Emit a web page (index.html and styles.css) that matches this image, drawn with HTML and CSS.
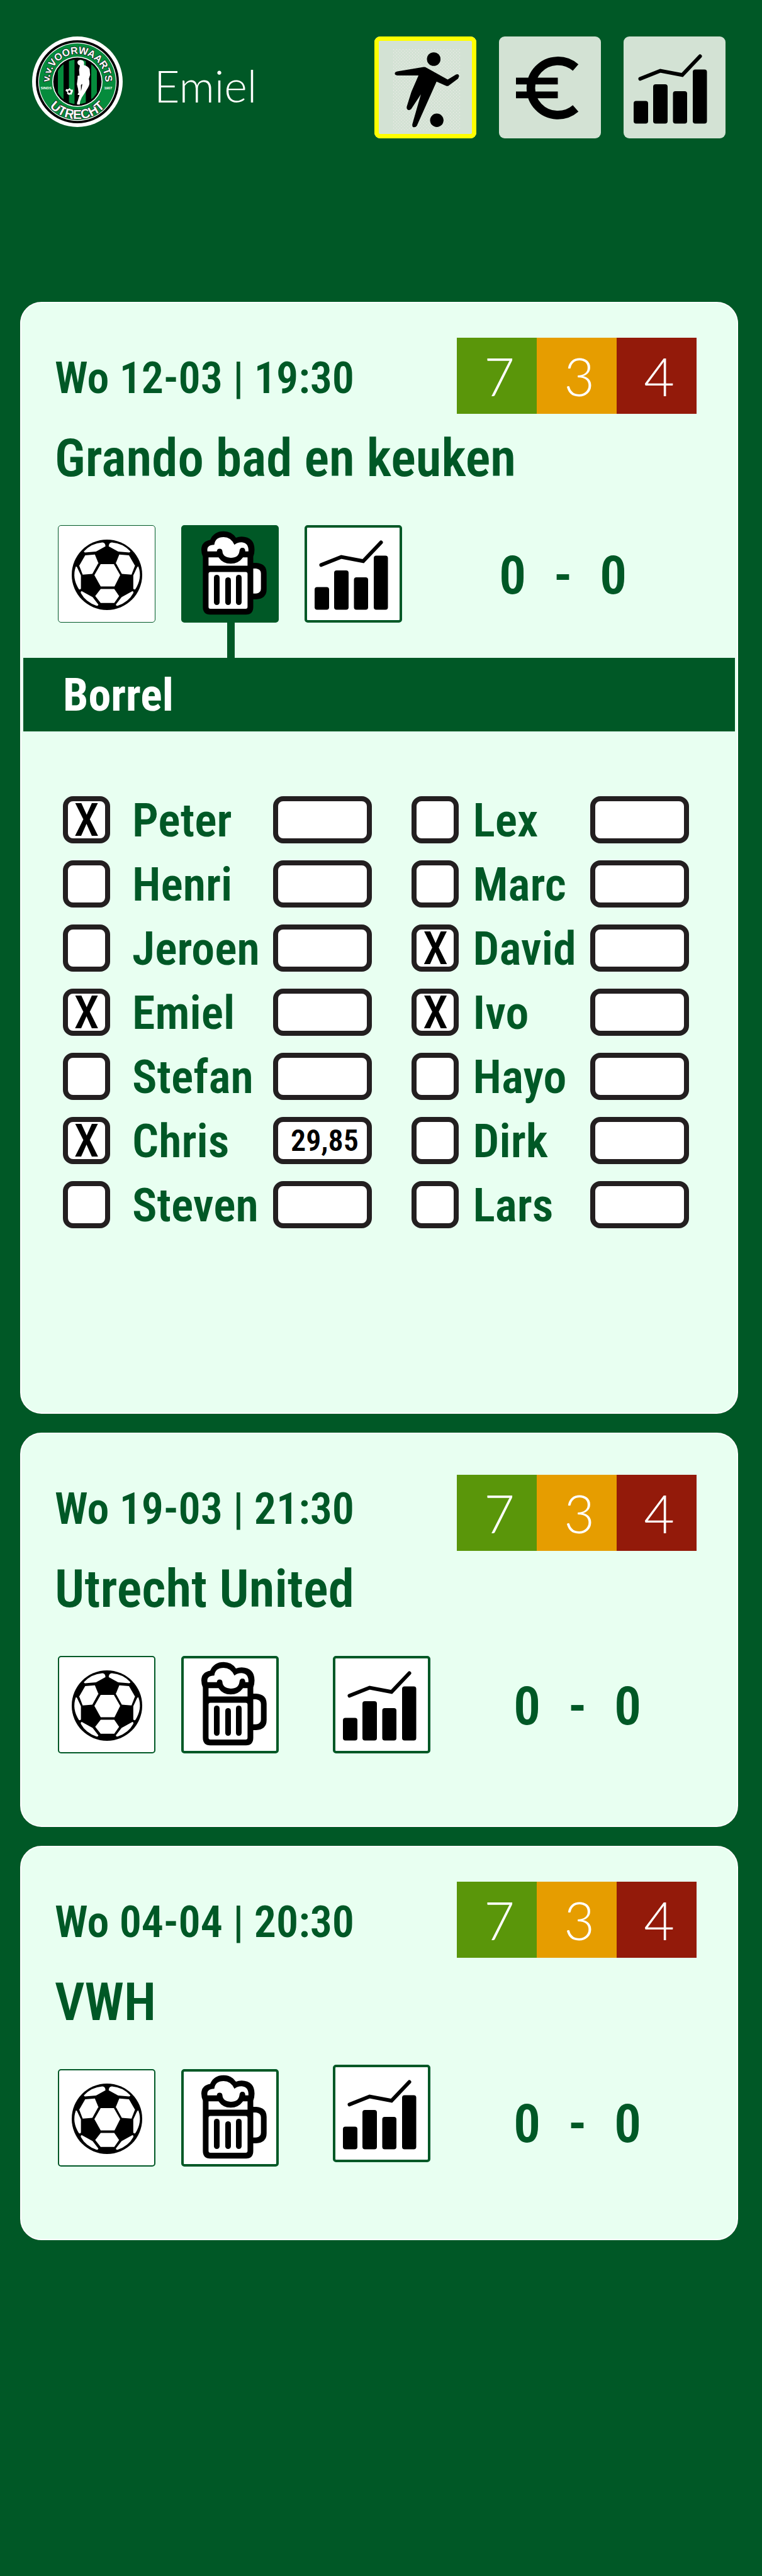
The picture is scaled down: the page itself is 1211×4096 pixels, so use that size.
FILE: index.html
```
<!DOCTYPE html>
<html lang="nl">
<head>
<meta charset="utf-8">
<meta name="viewport" content="width=device-width, initial-scale=1">
<title>v.v. Voorwaarts Utrecht</title>
<link rel="stylesheet" href="styles.css">
</head>
<body>
<svg class="sprite" aria-hidden="true">
  <defs>
    <symbol id="icon-ball" viewBox="0 0 155 155">
      <circle cx="78" cy="79" r="56"/>
      <g fill="#fff">
        <path d="M68 62h21l10 17.500l-9 18H68l-10-18z"/>
        <path d="M43.400 48l15.400-1.300 5.500 13.600-9.500 17.100-15.400 1.300-5.500-14.100z"/>
        <path d="M113 48l-15.400-1.300-5.500 13.600 9.500 17.100 15.400 1.300 5.500-14.100z"/>
        <path d="M41.500 41.500Q53 29 70.600 27.500Q75.600 28 75.600 33.800L60.600 42 43 43.500Q41 43 41.500 41.500z"/>
        <path d="M115 41.500Q103.500 29 85.800 27.500Q80.800 28 80.800 33.800L95.800 42 113.400 43.500Q115.400 43 115 41.500z"/>
        <path d="M28.500 66Q29.500 65 31 68L36.600 80v20.500Q36.500 103 33.500 102Q22 84 28.500 66z"/>
        <path d="M128 66Q127 65 125.400 68L119.800 80v20.500Q120 103 123 102Q134.500 84 128 66z"/>
        <path d="M68 101.500h21.600l7.700 11.300-7.700 11H68l-8.700-11z"/>
        <path d="M38 105L55.200 114.600 64.300 126.200Q64 129 61 128Q44 122 36.500 108Q36 105 38 105z"/>
        <path d="M118.400 105L101.200 114.600 92.100 126.200Q92.400 129 95.400 128Q112.400 122 119.900 108Q120.400 105 118.400 105z"/>
      </g>
    </symbol>
    <symbol id="icon-beer" viewBox="0 0 155 155">
      <path d="M34.400 50Q32 45 32 39Q32 26 46 23.500Q52 9.700 67.400 9.700Q80 9.700 87 20Q91 18.200 96 18.200Q116.500 19 116.500 39Q116.500 45 114.500 50V60H119Q135.700 61 135.700 76V102Q135.700 117 119 118H114.500V130Q114.500 142.300 103 142.300H46Q34.400 142.300 34.400 130z"/>
      <g fill="#fff">
        <path d="M41.600 41.800Q40 31.300 52.500 31.300Q54 19 67.400 19Q79 19 84.600 31.300Q89 27.200 96 27.200Q107.500 28 106.800 41.800H101.800Q101.800 36 97.300 36Q92.800 36 92.500 41.800Q91 52 78.700 52Q66 51 65.500 41.800Q65.200 37.400 61 37.400Q57 37.400 56.600 41.800z"/>
        <path d="M43.400 51.300H59.300Q66 61.300 78.700 61.300Q91 61.300 98.200 51.300H105.400V64.600H43.400z"/>
        <rect x="43.400" y="74.400" width="62" height="58.600" rx="3"/>
        <path d="M114.500 69H119Q126.700 70 126.700 77V101Q126.700 108 119 108.700H114.500z"/>
      </g>
      <rect x="52" y="79" width="9" height="48" rx="4.500"/>
      <rect x="70" y="83" width="9" height="44" rx="4.500"/>
      <rect x="87" y="79" width="9" height="48" rx="4.500"/>
    </symbol>
    <symbol id="icon-chart" viewBox="0 0 155 155">
      <rect x="16" y="98.500" width="23" height="36" rx="4"/>
      <rect x="47" y="72" width="23" height="62.500" rx="4"/>
      <rect x="78.500" y="83" width="22.500" height="51.500" rx="4"/>
      <rect x="110" y="48.500" width="22.500" height="86" rx="4"/>
      <path d="M26.500 63.300L58.400 50.500 93.200 57.300 121.500 27.500" fill="none" stroke="#000" stroke-width="6" stroke-linecap="round"/>
    </symbol>
    <pattern id="dots" width="5" height="5" patternUnits="userSpaceOnUse">
      <rect x="0" y="0" width="1" height="1.500"/>
      <rect x="2.500" y="2.500" width="1" height="1.500"/>
    </pattern>
    <symbol id="icon-player" viewBox="0 0 162 162">
      <rect x="29" y="20" width="108" height="130" fill="url(#dots)"/>
      <circle cx="94.300" cy="36" r="10.800"/>
      <circle cx="99.200" cy="133.300" r="10.700"/>
      <path d="M36.600 55.400L77 48.700Q80.500 48.300 83.300 50L116.500 68.600 129.700 60.400Q134 59 134.600 63L133 67 117.300 78.700H114.500L98.800 71.800 67.500 142Q65.500 145 62 144.200Q59.800 143.500 60.300 139.500L73.900 92 58.400 115.600Q56 118 53 116.500Q51 115.500 51.300 112L58.800 88 70.100 62H36.600Q32.400 61.500 32.400 58.800Q32.500 56 36.600 55.400z"/>
    </symbol>
    <symbol id="icon-euro" viewBox="0 0 162 162">
      <path d="M121.800 49.400A43 43 0 1 0 121.800 114.400" fill="none" stroke="#000" stroke-width="13.600"/>
      <path d="M27 65.500h66.500v10.800H27zM27 87.500h66.500v10.800H27z"/>
    </symbol>
  </defs>
</svg>

<header class="topbar">
  <svg class="logo" viewBox="25 35 720 720" role="img" aria-label="v.v. Voorwaarts Utrecht">
    <defs>
      <path id="ring-top" d="M385 617A222 222 0 0 1 385 173A222 222 0 0 1 385 617"/>
      <path id="ring-bottom" d="M385 98A297 297 0 0 0 385 692A297 297 0 0 0 385 98"/>
      <clipPath id="disc"><circle cx="385" cy="395" r="178"/></clipPath>
    </defs>
    <circle cx="385" cy="395" r="360" fill="#fff"/>
    <circle cx="385" cy="395" r="330"/>
    <circle cx="385" cy="395" r="311" fill="#fff"/>
    <circle cx="385" cy="395" r="305" fill="#058b3c"/>
    <circle cx="385" cy="395" r="200" fill="#fff"/>
    <circle cx="385" cy="395" r="192"/>
    <path clip-path="url(#disc)" fill="#058b3c" d="M230 200h45v390h-45zM318 200h44v390h-44zM405 200h47v390h-47zM495 200h45v390h-45z"/>
    <path fill="#fff" d="M385 238Q392 220 415 222Q438 226 438 245L437 262Q470 270 482 295L486 340 476 372Q488 410 470 440L448 478 420 520Q404 548 404 576H384Q378 570 388 548Q396 520 402 500H388Q386 488 394 482Q392 450 381 415L388 362Q384 354 390 346H402L398 300 405 266Q384 258 385 238z"/>
    <path d="M413 420L424 412 420 440 414 470z"/>
    <path fill="#fff" d="M312 455l10-10 12 12 15 0 0 17-6 10-4 14-12-2-10 4-14-10 2-14-14-8 4-14z"/>
    <circle cx="321" cy="474" r="10"/>
    <g class="logo-text">
      <text font-size="80"><textPath href="#ring-top" startOffset="50%" text-anchor="middle">v.v.VOORWAARTS</textPath></text>
      <text font-size="104"><textPath href="#ring-bottom" startOffset="50%" text-anchor="middle">UTRECHT</textPath></text>
    </g>
    <g class="logo-year">
      <text x="92" y="455">SINDS</text>
      <text x="597" y="455">1907</text>
    </g>
  </svg>
  <span class="user">Emiel</span>
  <nav class="tabs">
    <button class="tab tab-active" type="button" aria-label="Wedstrijden"><svg class="tab-icon"><use href="#icon-player"/></svg></button>
    <button class="tab" type="button" aria-label="Kosten"><svg class="tab-icon"><use href="#icon-euro"/></svg></button>
    <button class="tab" type="button" aria-label="Statistieken"><svg class="icon"><use href="#icon-chart"/></svg></button>
  </nav>
</header>

<main class="matches">
  <article class="card">
    <div class="card-head">
      <div>
        <p class="date">Wo 12-03 | 19:30</p>
        <h2 class="title">Grando bad en keuken</h2>
      </div>
      <div class="tally"><span class="yes">7</span><span class="maybe">3</span><span class="no">4</span></div>
    </div>
    <div class="actions actions-open">
      <button class="action action-ball" type="button" aria-label="Wedstrijd"><svg class="icon"><use href="#icon-ball"/></svg></button>
      <button class="action action-selected" type="button" aria-label="Borrel"><svg class="icon"><use href="#icon-beer"/></svg></button>
      <button class="action" type="button" aria-label="Statistieken"><svg class="icon"><use href="#icon-chart"/></svg></button>
      <div class="score"><span>0</span><span>-</span><span>0</span></div>
    </div>
    <h3 class="section">Borrel</h3>
    <form class="players">
      <div class="column">
        <div class="player"><input class="check" type="checkbox" id="peter" checked><label for="peter">Peter</label><input class="amount" type="text" aria-label="Bedrag Peter"></div>
        <div class="player"><input class="check" type="checkbox" id="henri"><label for="henri">Henri</label><input class="amount" type="text" aria-label="Bedrag Henri"></div>
        <div class="player"><input class="check" type="checkbox" id="jeroen"><label for="jeroen">Jeroen</label><input class="amount" type="text" aria-label="Bedrag Jeroen"></div>
        <div class="player"><input class="check" type="checkbox" id="emiel" checked><label for="emiel">Emiel</label><input class="amount" type="text" aria-label="Bedrag Emiel"></div>
        <div class="player"><input class="check" type="checkbox" id="stefan"><label for="stefan">Stefan</label><input class="amount" type="text" aria-label="Bedrag Stefan"></div>
        <div class="player"><input class="check" type="checkbox" id="chris" checked><label for="chris">Chris</label><input class="amount" type="text" aria-label="Bedrag Chris" value="29,85"></div>
        <div class="player"><input class="check" type="checkbox" id="steven"><label for="steven">Steven</label><input class="amount" type="text" aria-label="Bedrag Steven"></div>
      </div>
      <div class="column column-right">
        <div class="player"><input class="check" type="checkbox" id="lex"><label for="lex">Lex</label><input class="amount" type="text" aria-label="Bedrag Lex"></div>
        <div class="player"><input class="check" type="checkbox" id="marc"><label for="marc">Marc</label><input class="amount" type="text" aria-label="Bedrag Marc"></div>
        <div class="player"><input class="check" type="checkbox" id="david" checked><label for="david">David</label><input class="amount" type="text" aria-label="Bedrag David"></div>
        <div class="player"><input class="check" type="checkbox" id="ivo" checked><label for="ivo">Ivo</label><input class="amount" type="text" aria-label="Bedrag Ivo"></div>
        <div class="player"><input class="check" type="checkbox" id="hayo"><label for="hayo">Hayo</label><input class="amount" type="text" aria-label="Bedrag Hayo"></div>
        <div class="player"><input class="check" type="checkbox" id="dirk"><label for="dirk">Dirk</label><input class="amount" type="text" aria-label="Bedrag Dirk"></div>
        <div class="player"><input class="check" type="checkbox" id="lars"><label for="lars">Lars</label><input class="amount" type="text" aria-label="Bedrag Lars"></div>
      </div>
    </form>
  </article>

  <article class="card card-closed">
    <div class="card-head">
      <div>
        <p class="date">Wo 19-03 | 21:30</p>
        <h2 class="title">Utrecht United</h2>
      </div>
      <div class="tally tally-low"><span class="yes">7</span><span class="maybe">3</span><span class="no">4</span></div>
    </div>
    <div class="actions">
      <button class="action action-ball" type="button" aria-label="Wedstrijd"><svg class="icon"><use href="#icon-ball"/></svg></button>
      <button class="action" type="button" aria-label="Borrel"><svg class="icon"><use href="#icon-beer"/></svg></button>
      <button class="action action-stats" type="button" aria-label="Statistieken"><svg class="icon"><use href="#icon-chart"/></svg></button>
      <div class="score"><span>0</span><span>-</span><span>0</span></div>
    </div>
  </article>

  <article class="card card-closed">
    <div class="card-head">
      <div>
        <p class="date">Wo 04-04 | 20:30</p>
        <h2 class="title">VWH</h2>
      </div>
      <div class="tally"><span class="yes">7</span><span class="maybe">3</span><span class="no">4</span></div>
    </div>
    <div class="actions actions-split">
      <button class="action action-ball" type="button" aria-label="Wedstrijd"><svg class="icon"><use href="#icon-ball"/></svg></button>
      <button class="action" type="button" aria-label="Borrel"><svg class="icon"><use href="#icon-beer"/></svg></button>
      <button class="action action-stats" type="button" aria-label="Statistieken"><svg class="icon"><use href="#icon-chart"/></svg></button>
      <div class="score"><span>0</span><span>-</span><span>0</span></div>
    </div>
  </article>
</main>
</body>
</html>
```
FILE: styles.css
```
:root {
  --green: #005826;
  --mint: #e8fff1;
  --ink: #231f20;
}

* { box-sizing: border-box; }

body {
  margin: 0;
  min-height: 100vh;
  background: var(--green);
  color: var(--green);
  font-family: "Roboto Condensed", "Liberation Sans Narrow", "Arial Narrow", sans-serif;
  font-weight: 600;
}

button, input {
  margin: 0;
  padding: 0;
  font: inherit;
}

svg { display: block; }

.sprite {
  position: absolute;
  width: 0;
  height: 0;
}

#dots { fill: #f2ecec; }

/* Top bar */

.topbar {
  display: flex;
  align-items: flex-start;
  height: 480px;
  padding: 58px 58px 0 51px;
}

.logo {
  flex: none;
  width: 144px;
  height: 144px;
}

.logo-text {
  fill: #fff;
  stroke: #1b1b1b;
  stroke-width: 8px;
  paint-order: stroke;
  font-family: "Liberation Sans", sans-serif;
  font-weight: 700;
}

.logo-year {
  fill: #fff;
  font-family: "Liberation Sans", sans-serif;
  font-size: 29px;
}

.user {
  padding-left: 50px;
  color: #fff;
  font-family: Lato, sans-serif;
  font-size: 70px;
  font-weight: 300;
  line-height: 156px;
}

.tabs {
  display: flex;
  gap: 36px;
  margin-left: auto;
}

.tab {
  width: 162px;
  height: 162px;
  border: 0;
  border-radius: 9px;
  background: #d3e2d4;
}

.tab-active { box-shadow: inset 0 0 0 7px #ff0; }

.tab-icon {
  width: 162px;
  height: 162px;
}

.icon {
  width: 155px;
  height: 155px;
}

/* Match cards */

.matches {
  display: grid;
  gap: 30px;
  padding: 0 38px 0 32px;
}

.card {
  padding: 55px 0 293px;
  border: 2px solid #fff;
  border-radius: 34px;
  background: var(--mint);
}

.card-closed { padding-bottom: 115px; }

.card-head {
  display: flex;
  justify-content: space-between;
  align-items: flex-start;
  padding: 0 64px 0 53px;
}

.date, .title {
  margin: 0;
  line-height: 128px;
  white-space: nowrap;
}

.date {
  font-size: 70px;
  font-weight: 600;
}

.title {
  width: 0;
  font-size: 83px;
  font-weight: 600;
}

.tally {
  display: flex;
  color: #fff;
  font-family: Lato, sans-serif;
  font-size: 84px;
  font-weight: 300;
  line-height: 121px;
  text-align: center;
}

.tally span {
  width: 127px;
  padding-left: 8px;
  height: 121px;
}

.tally-low { margin-top: 10px; }

.yes { background: #5a960a; }
.maybe { background: #e69d00; }
.no { background: #931a0a; }

.actions {
  display: flex;
  gap: 41px;
  padding: 42px 0 0 58px;
}

.actions-open { padding-bottom: 56px; }

.action {
  flex: none;
  display: grid;
  place-content: center;
  width: 155px;
  height: 155px;
  border: 4px solid var(--green);
  border-radius: 5px;
  background: #fff;
}

.action-ball { border-width: 1px; }

.card-closed .action-ball { border-width: 2px; }

.action-selected {
  position: relative;
  background: var(--green);
}

.action-selected::after {
  content: "";
  position: absolute;
  top: 100%;
  left: 69px;
  width: 12px;
  height: 60px;
  background: var(--green);
}

.action-stats { margin-left: 45px; }

.actions-split .action-stats { margin-top: -7px; }

.score {
  display: flex;
  gap: 44px;
  height: 155px;
  margin-left: 113px;
  font-size: 86px;
  line-height: 159px;
}

.action-stats + .score { margin-left: 91px; }

.actions-split .score { line-height: 173px; }

.section {
  margin: 0 3px;
  padding-left: 63px;
  background: var(--green);
  color: #fff;
  font-size: 72px;
  line-height: 119px;
  height: 117px;
}

/* Player list */

.players {
  display: grid;
  grid-template-columns: 492fr 441fr;
  gap: 63px;
  padding: 103px 76px 0 66px;
}

.column {
  display: grid;
  gap: 27px;
}

.player {
  display: grid;
  grid-template-columns: 75px 1fr 157px;
  height: 75px;
}

.player label {
  width: 0;
  padding-left: 35px;
  font-size: 74px;
  line-height: 77px;
  white-space: nowrap;
}

.column-right label { padding-left: 22px; }

.check, .amount {
  appearance: none;
  width: 100%;
  height: 75px;
  border: 8px solid var(--ink);
  border-radius: 16px;
  background: #fff;
  color: #000;
}

.check:checked::before {
  content: "X";
  display: block;
  font-size: 72px;
  font-weight: 500;
  line-height: 61px;
  text-align: center;
}

.amount {
  padding-left: 6px;
  font-size: 48px;
  text-align: center;
}
```
